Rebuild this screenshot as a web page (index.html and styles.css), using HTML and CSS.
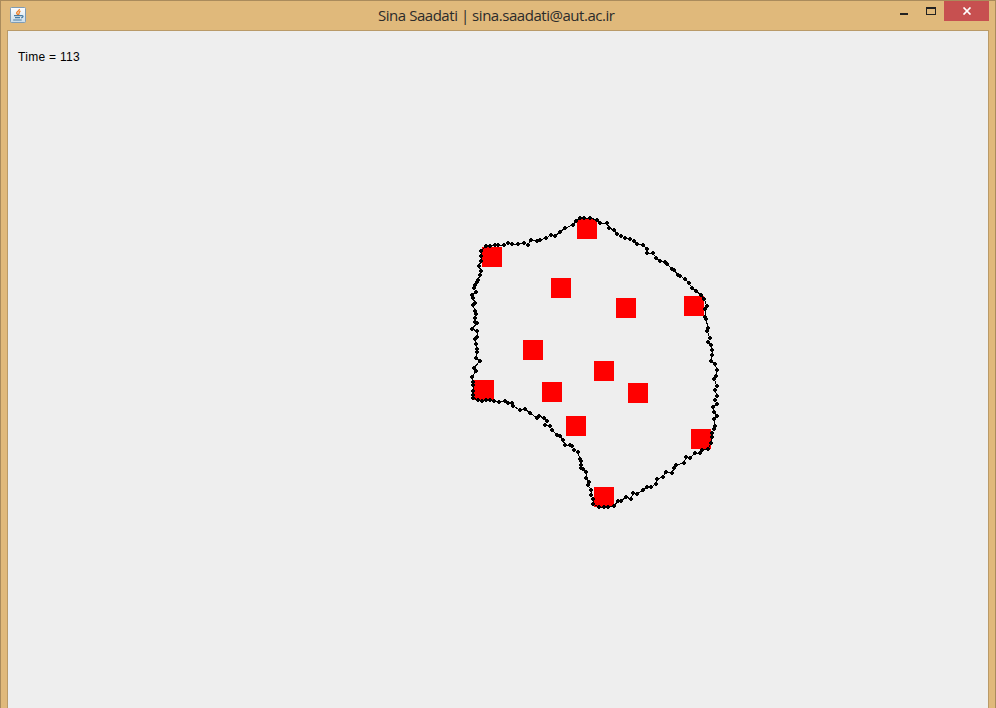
FILE: index.html
```html
<!DOCTYPE html>
<html lang="en">
<head>
<meta charset="utf-8">
<title>Sina Saadati | sina.saadati@aut.ac.ir</title>
<link rel="stylesheet" href="styles.css">
</head>
<body>
<div class="window">
  <header class="titlebar">
    <svg class="app-icon" viewBox="0 0 16 16" width="16" height="16">
      <defs><linearGradient id="tile" x1="0" y1="0" x2="0" y2="1"><stop offset="0" stop-color="#fff"/><stop offset="1" stop-color="#cbdce8"/></linearGradient></defs>
      <rect x=".5" y=".5" width="15" height="15" rx="1" fill="url(#tile)" stroke="#7f9cb5"/>
      <path d="M9.3 2C10 4 5.8 4.6 6.7 6.5L8 8M10.5 4.2C8.2 5 9.7 6.3 8.4 8" fill="none" stroke="#ef7d22" stroke-width="1.3"/>
      <path d="M4 8.7h7M5 10.7h5M3.2 13h8.5M11 8.7c3-.6 2.4 1.8.2 2.2" fill="none" stroke="#477ba2" stroke-width="1.2"/>
    </svg>
    <h1 class="title">Sina Saadati | sina.saadati@aut.ac.ir</h1>
    <div class="controls">
      <span class="control minimize"></span>
      <span class="control maximize"></span>
      <span class="control close"><svg width="10" height="8" viewBox="0 0 10 8"><path d="M1.5.5l7 7M8.5.5l-7 7" stroke="#fff" stroke-width="1.7"/></svg></span>
    </div>
  </header>
  <main class="content">
    <p class="time">Time = 113</p>
    <svg class="plot" viewBox="8 31 980 677" width="980" height="677">
      <defs>
        <marker id="dot" markerUnits="userSpaceOnUse" markerWidth="4" markerHeight="4" overflow="visible">
          <path d="M-1-2H1V-1H2V1H1V2H-1V1H-2V-1H-1z"/>
        </marker>
      </defs>
      <g class="obstacles">
        <rect x="482" y="247" width="20" height="20"/>
        <rect x="577" y="219" width="20" height="20"/>
        <rect x="551" y="278" width="20" height="20"/>
        <rect x="616" y="298" width="20" height="20"/>
        <rect x="684" y="296" width="20" height="20"/>
        <rect x="523" y="340" width="20" height="20"/>
        <rect x="594" y="361" width="20" height="20"/>
        <rect x="542" y="382" width="20" height="20"/>
        <rect x="628" y="383" width="20" height="20"/>
        <rect x="474" y="380" width="20" height="20"/>
        <rect x="566" y="416" width="20" height="20"/>
        <rect x="691" y="429" width="20" height="20"/>
        <rect x="594" y="487" width="20" height="20"/>
      </g>
      <path class="chain" d="M486 246L490 246 495 245 498 245 504 245 508 243 512 244 518 244 524 243 528 245 531 240 537 241 540 240 546 238 551 235 555 236 560 232 565 228 573 225 576 221 580 218 584 218 590 218 597 220 600 223 607 223 609 228 614 230 617 234 621 236 625 238 630 239 634 241 637 244 643 245 647 249 647 253 653 253 656 258 660 261 665 262 667 264 672 269 674 270 678 275 680 276 685 279 689 283 692 288 696 291 701 295 704 299 707 306 705 309 705 317 706 319 708 328 707 331 710 338 708 342 711 345 712 350 712 355 711 361 715 364 717 370 716 376 714 379 717 386 715 390 717 396 715 400 717 404 713 407 714 412 717 416 714 419 715 426 714 429 712 433 712 437 711 443 708 449 702 450 700 453 695 453 690 458 686 457 684 463 676 465 674 468 672 473 666 472 663 477 657 479 656 484 651 487 647 487 643 490 637 494 633 493 631 499 626 497 621 501 618 501 614 506 608 507 604 507 599 507 593 504 593 499 591 495 591 490 588 485 589 482 586 478 586 472 583 469 581 468 581 465 581 461 580 459 578 452 574 450 572 446 570 445 565 445 563 440 560 436 557 435 552 430 550 426 545 425 547 421 544 418 539 416 537 418 530 413 525 409 520 410 513 406 512 403 508 403 505 401 499 402 494 401 490 400 486 400 482 401 478 400 473 398 473 395 473 391 473 385 473 382 472 377 476 371 474 368 480 361 476 358 477 352 477 349 476 344 475 339 477 337 477 331 472 329 477 323 475 322 475 318 476 314 475 311 473 305 475 303 473 298 472 295 476 292 474 288 475 285 477 282 478 280 480 275 481 271 479 266 481 261 481 256 481 251Z"/>
    </svg>
  </main>
</div>
</body>
</html>
```
FILE: styles.css
```css
* { box-sizing: border-box; }
body { margin: 0; overflow: hidden; }
.window {
  width: 996px; height: 708px; padding: 0 6px;
  display: flex; flex-direction: column;
  background: #e0b97b;
  border: 1px solid #aa8b5c; border-bottom: 0;
}
.titlebar {
  height: 29px; flex: none; padding-left: 3px;
  display: grid; grid-template-columns: 16px 1fr 99px;
}
.app-icon { margin-top: 6px; }
.title {
  margin: 0; padding: 4px 0 0 352px; white-space: nowrap;
  font: 400 15px/20px "Open Sans", sans-serif; letter-spacing: -.46px; color: #2b2b2b;
}
.controls { display: flex; height: 20px; }
.minimize { width: 8px; height: 2px; margin: 12px 0 0 10px; background: #222; }
.maximize { width: 10px; height: 8px; margin: 6px 0 0 18px; border: 1px solid #222; border-top-width: 2px; }
.close { width: 45px; height: 20px; margin-left: 8px; background: #c75050; display: flex; align-items: center; justify-content: center; }
.content {
  flex: 1; min-height: 0; display: grid;
  background: #eee; border: 1px solid #b99a68; border-bottom: 0;
}
.time, .plot { grid-area: 1 / 1; }
.time { margin: 18px 0 0 10px; font: 12px/16px "Liberation Sans", Arial, sans-serif; color: #000; letter-spacing: .3px; }
.plot { display: block; shape-rendering: crispEdges; }
.obstacles { fill: #f00; }
.chain { fill: none; stroke: #000; stroke-width: 1; marker-start: url(#dot); marker-mid: url(#dot); }
```
